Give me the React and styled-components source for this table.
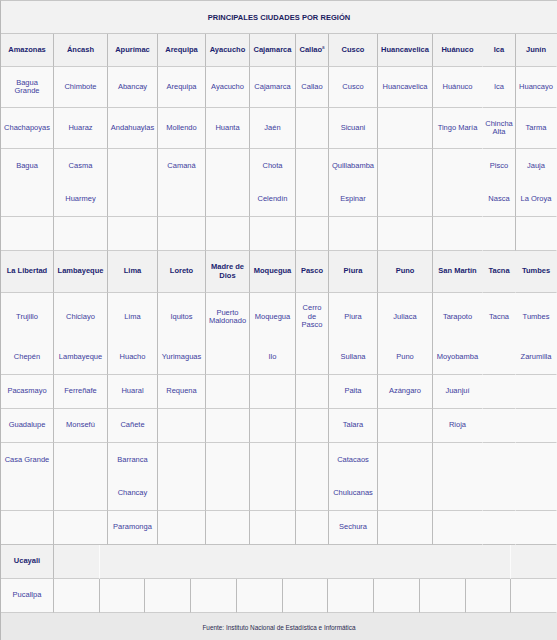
import { createGlobalStyle, styled } from "styled-components";

const GlobalStyle = createGlobalStyle`
  html, body {
    margin: 0;
    padding: 0;
    background: #ffffff;
  }
  body {
    font-family: "Liberation Sans", Arial, sans-serif;
  }
`;

const Frame = styled.div`
  width: 557px;
  box-sizing: border-box;
  border-left: 1px solid #b8b8b8;
  border-top: 1px solid #c6c6c6;
  background: #f9f9f9;
  font-size: 7.5px;
`;

const Title = styled.div`
  height: 33px;
  box-sizing: border-box;
  border-bottom: 1px solid #c8c8c8;
  background: #f2f2f2;
  display: flex;
  align-items: center;
  justify-content: center;
  font-weight: bold;
  letter-spacing: 0.05px;
  color: #1a2060;
`;

const Grid = styled.div`
  display: grid;
  grid-template-columns: ${(p) => p.$cols};
`;

const Cell = styled.div`
  box-sizing: border-box;
  height: ${(p) => p.$h}px;
  grid-column: span ${(p) => p.$span || 1};
  border-right: 1px solid ${(p) => (p.$noRight ? "transparent" : p.$soft ? "#fbfbfb" : "#bcbcbc")};
  border-bottom: 1px solid ${(p) => (p.$thick ? "#c2c2c2" : "#cdcdcd")};
  background: ${(p) => (p.$head ? "#f1f1f1" : "#f9f9f9")};
  display: flex;
  flex-direction: column;
`;

const Slot = styled.div`
  flex: ${(p) => (p.$h ? `0 0 ${p.$h}px` : "1 1 auto")};
  display: flex;
  align-items: center;
  justify-content: center;
  text-align: center;
  line-height: 8.4px;
  font-weight: ${(p) => (p.$head ? "bold" : "normal")};
  color: ${(p) => (p.$head ? "#1c1f70" : "#3d3d9e")};
`;

const Sup = styled.sup`
  font-size: 4.5px;
  line-height: 0;
  vertical-align: 3px;
  font-weight: normal;
`;

const Footer = styled.div`
  height: 28px;
  background: #e9e9e9;
  display: flex;
  align-items: center;
  justify-content: center;
  font-size: 6.4px;
  color: #2a2a50;
`;

const COLS = "53px 54px 50px 48px 44px 46px 33px 49px 55px 50px 33px 41px";

// columns without a right border, per section
const topOpen = [9];
const midOpen = [9, 10];

const topBands = [
  {
    h: 33,
    head: true,
    cells: [
      "Amazonas", "Áncash", "Apurímac", "Arequipa", "Ayacucho", "Cajamarca",
      "CALLAO", "Cusco", "Huancavelica", "Huánuco", "Ica", "Junín",
    ],
  },
  {
    h: 41,
    cells: [
      "Bagua\nGrande", "Chimbote", "Abancay", "Arequipa", "Ayacucho", "Cajamarca",
      "Callao", "Cusco", "Huancavelica", "Huánuco", "Ica", "Huancayo",
    ],
  },
  {
    h: 41,
    cells: [
      "Chachapoyas", "Huaraz", "Andahuaylas", "Mollendo", "Huanta", "Jaén",
      "", "Sicuani", "", "Tingo María", "Chincha\nAlta", "Tarma",
    ],
  },
  {
    h: 68,
    slots: [34],
    cells: [
      ["Bagua", ""], ["Casma", "Huarmey"], ["", ""], ["Camaná", ""], ["", ""],
      ["Chota", "Celendín"], ["", ""], ["Quillabamba", "Espinar"], ["", ""],
      ["", ""], ["Pisco", "Nasca"], ["Jauja", "La Oroya"],
    ],
  },
  { h: 34, cells: Array(12).fill("") },
];

const midBands = [
  {
    h: 42,
    head: true,
    cells: [
      "La Libertad", "Lambayeque", "Lima", "Loreto", "Madre de\nDios", "Moquegua",
      "Pasco", "Piura", "Puno", "San Martín", "Tacna", "Tumbes",
    ],
  },
  {
    h: 82,
    slots: [48],
    cells: [
      ["Trujillo", "Chepén"], ["Chiclayo", "Lambayeque"], ["Lima", "Huacho"],
      ["Iquitos", "Yurimaguas"], ["Puerto\nMaldonado", ""], ["Moquegua", "Ilo"],
      ["Cerro\nde\nPasco", ""], ["Piura", "Sullana"], ["Juliaca", "Puno"],
      ["Tarapoto", "Moyobamba"], ["Tacna", ""], ["Tumbes", "Zarumilla"],
    ],
  },
  {
    h: 34,
    cells: ["Pacasmayo", "Ferreñafe", "Huaral", "Requena", "", "", "", "Paita", "Azángaro", "Juanjuí", "", ""],
  },
  {
    h: 34,
    cells: ["Guadalupe", "Monsefú", "Cañete", "", "", "", "", "Talara", "", "Rioja", "", ""],
  },
  {
    h: 68,
    slots: [34],
    cells: [
      ["Casa Grande", ""], ["", ""], ["Barranca", "Chancay"], ["", ""], ["", ""],
      ["", ""], ["", ""], ["Catacaos", "Chulucanas"], ["", ""], ["", ""], ["", ""], ["", ""],
    ],
  },
  {
    h: 34,
    thick: true,
    cells: ["", "", "Paramonga", "", "", "", "", "Sechura", "", "", "", ""],
  },
];

function Text({ value }) {
  if (value === "CALLAO") {
    return (
      <span>
        Callao<Sup>a</Sup>
      </span>
    );
  }
  const lines = value.split("\n");
  return lines.map((line, i) => (
    <span key={i}>
      {line}
      {i < lines.length - 1 && <br />}
    </span>
  ));
}

function Band({ band, open }) {
  return band.cells.map((cell, i) => {
    const parts = Array.isArray(cell) ? cell : [cell];
    return (
      <Cell
        key={i}
        $h={band.h}
        $head={band.head}
        $thick={band.thick}
        $noRight={open.includes(i) || i === band.cells.length - 1}
      >
        {parts.map((p, j) => (
          <Slot key={j} $head={band.head} $h={j < parts.length - 1 ? band.slots[j] : 0}>
            <div>
              <Text value={p} />
            </div>
          </Slot>
        ))}
      </Cell>
    );
  });
}

export default function App() {
  return (
    <>
      <GlobalStyle />
      <Frame>
        <Title>PRINCIPALES CIUDADES POR REGIÓN</Title>
        <Grid $cols={COLS}>
          {topBands.map((b, i) => (
            <Band key={i} band={b} open={topOpen} />
          ))}
          {midBands.map((b, i) => (
            <Band key={i} band={b} open={midOpen} />
          ))}
        </Grid>
        <Grid $cols="53px repeat(11, 1fr)">
          <Cell $h={34} $head>
            <Slot $head>Ucayali</Slot>
          </Cell>
          <Cell $h={34} $head $soft />
          <Cell $h={34} $head $soft $span={9} />
          <Cell $h={34} $head $noRight />
          <Cell $h={34}>
            <Slot>Pucallpa</Slot>
          </Cell>
          {Array.from({ length: 11 }, (_, i) => (
            <Cell key={i} $h={34} $noRight={i === 10} />
          ))}
        </Grid>
        <Footer>Fuente: Instituto Nacional de Estadística e Informática</Footer>
      </Frame>
    </>
  );
}
